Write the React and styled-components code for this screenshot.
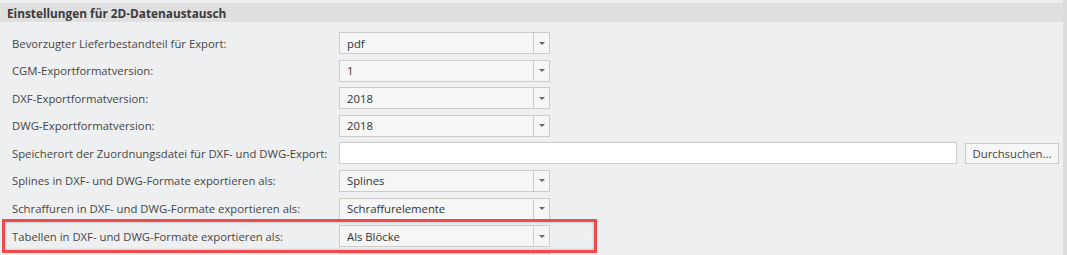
import React from 'react';
import styled, { createGlobalStyle } from 'styled-components';

const GlobalStyle = createGlobalStyle`
  html, body {
    margin: 0;
    padding: 0;
    background: #eeeff1;
  }
  body {
    font-family: "Open Sans", "Noto Sans", "Liberation Sans", sans-serif;
    font-size: 11.3px;
    color: #444;
  }
`;

const Page = styled.div`
  position: relative;
  width: 1067px;
  height: 255px;
  display: flex;
  overflow: hidden;
  background: #eeeff1;
`;

const Content = styled.div`
  flex: 1;
  display: flex;
  flex-direction: column;
  padding-top: 3px;
`;

const Scrollbar = styled.div`
  width: 4px;
  background: #dcdcde;
`;

const SectionHeader = styled.div`
  height: 19px;
  flex-shrink: 0;
  display: flex;
  align-items: center;
  padding-left: 7px;
  background: #dfdfe0;
  font-weight: 700;
  font-size: 11.8px;
  color: #3a3a3a;
`;

const Form = styled.div`
  display: grid;
  grid-template-columns: 327px 1fr;
  grid-auto-rows: 22px;
  row-gap: 5.6px;
  padding: 10px 0 0 12px;
  align-items: center;
`;

const Label = styled.div`
  color: #454545;
  white-space: nowrap;
`;

const Select = styled.div`
  width: 211px;
  height: 22px;
  box-sizing: border-box;
  display: flex;
  border: 1px solid #cbcbcb;
  background: #f6f6f6;
`;

const SelectValue = styled.div`
  flex: 1;
  display: flex;
  align-items: center;
  padding-left: 7px;
  color: #333;
`;

const SelectArrow = styled.div`
  width: 15px;
  border-left: 1px solid #cbcbcb;
  display: flex;
  align-items: center;
  justify-content: center;
  &::after {
    content: '';
    border-left: 3px solid transparent;
    border-right: 3px solid transparent;
    border-top: 3px solid #666;
  }
`;

const FileRow = styled.div`
  display: flex;
  gap: 8px;
  align-items: center;
  padding-right: 4px;
`;

const TextInput = styled.div`
  width: 618px;
  height: 22px;
  box-sizing: border-box;
  border: 1px solid #cbcbcb;
  background: #fff;
`;

const Button = styled.div`
  width: 94px;
  height: 21px;
  box-sizing: border-box;
  border: 1px solid #cbcbcb;
  background: #f6f6f6;
  display: flex;
  align-items: center;
  justify-content: center;
  color: #444;
`;

const Highlight = styled.div`
  position: absolute;
  left: 2px;
  top: 219px;
  width: 595px;
  height: 34px;
  box-sizing: border-box;
  border: 3px solid #f04a4c;
  box-shadow: inset 0 0 3px rgba(0, 0, 0, 0.25);
  pointer-events: none;
`;

const rows = [
  { label: 'Bevorzugter Lieferbestandteil für Export:', value: 'pdf' },
  { label: 'CGM-Exportformatversion:', value: '1' },
  { label: 'DXF-Exportformatversion:', value: '2018' },
  { label: 'DWG-Exportformatversion:', value: '2018' },
  { label: 'Speicherort der Zuordnungsdatei für DXF- und DWG-Export:', file: true },
  { label: 'Splines in DXF- und DWG-Formate exportieren als:', value: 'Splines' },
  { label: 'Schraffuren in DXF- und DWG-Formate exportieren als:', value: 'Schraffurelemente' },
  { label: 'Tabellen in DXF- und DWG-Formate exportieren als:', value: 'Als Blöcke' },
  // next row, cut off by the window edge
  { label: '', value: '' },
];

const App = () => (
  <Page>
    <GlobalStyle />
    <Content>
      <SectionHeader>Einstellungen für 2D-Datenaustausch</SectionHeader>
      <Form>
        {rows.map((r, i) => (
          <React.Fragment key={i}>
            <Label>{r.label}</Label>
            {r.file ? (
              <FileRow>
                <TextInput />
                <Button>Durchsuchen...</Button>
              </FileRow>
            ) : (
              <Select>
                <SelectValue>{r.value}</SelectValue>
                <SelectArrow />
              </Select>
            )}
          </React.Fragment>
        ))}
      </Form>
    </Content>
    <Scrollbar />
    <Highlight />
  </Page>
);

export default App;
